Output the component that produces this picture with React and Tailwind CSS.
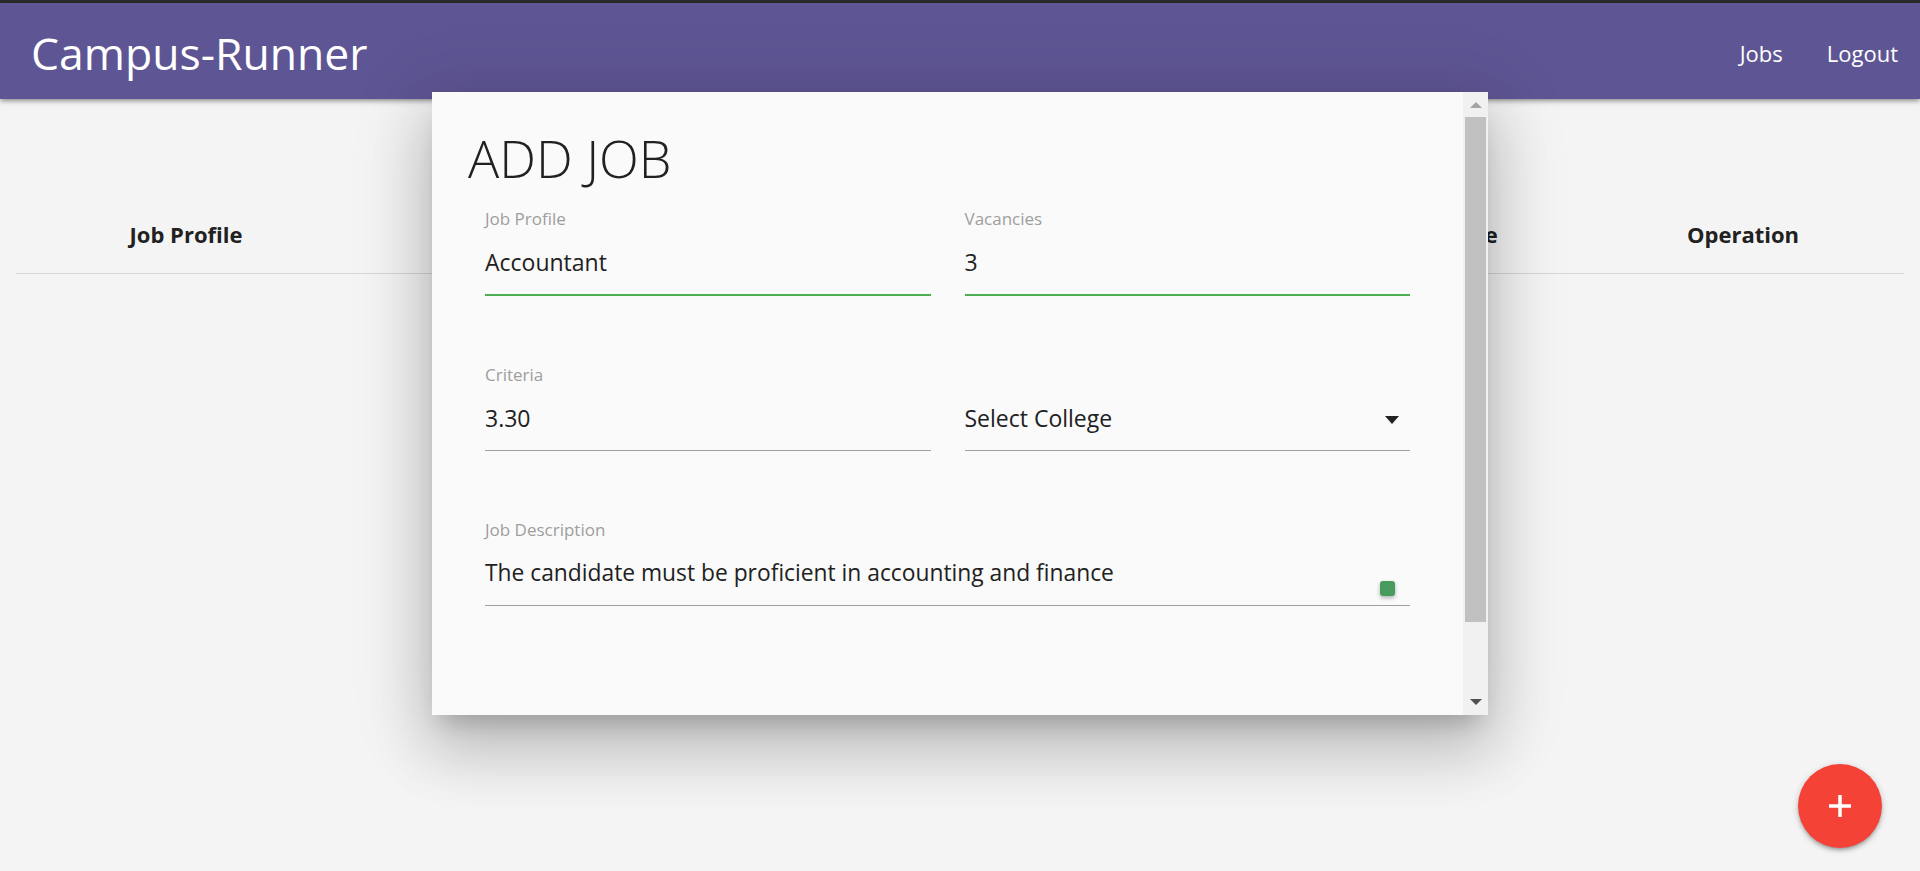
import React from "react";

const font = { fontFamily: '"Open Sans", "Noto Sans", sans-serif' };

function Field({ label, value, focused, small, children }) {
  return (
    <div>
      <div className="h-[20px] text-[17px] leading-[20px] text-[#9e9e9e]">{label}</div>
      <div
        className={
          small
            ? "relative mt-[18px] h-[30px] text-[22.8px] leading-[30px] text-[#212121] whitespace-nowrap"
            : "relative mt-[18px] h-[30px] text-[23px] leading-[30px] text-[#212121] whitespace-nowrap"
        }
      >
        {value}
        {children}
      </div>
      <div
        className={
          focused
            ? "mt-[17px] h-[1px] bg-[#4caf50] shadow-[0_1px_0_0_#4caf50]"
            : "mt-[17px] h-[1px] bg-[#9e9e9e]"
        }
      />
    </div>
  );
}

export default function App() {
  return (
    <div className="relative h-[871px] w-[1920px] overflow-hidden bg-[#f4f4f4]" style={font}>
      <div className="h-[3px] bg-[#2b2b2b]" />
      <nav className="relative z-10 flex h-[96px] items-center justify-between bg-[#5e5594] pt-[3px] pl-[31px] shadow-[0_3px_3px_0_rgba(0,0,0,0.14),0_4px_2px_-3px_rgba(0,0,0,0.12),0_2px_7px_0_rgba(0,0,0,0.2)]">
        <div className="text-[44.5px] leading-[61px] text-white">Campus-Runner</div>
        <div className="flex h-full items-center text-[22px] leading-[30px] text-white">
          <span className="px-[22px]">Jobs</span>
          <span className="px-[22px]">Logout</span>
        </div>
      </nav>

      <main className="px-[16px] pt-[98px]">
        <div className="grid grid-cols-[340px_489px_489px_248px_1fr] border-b border-[#d6d6d6] pt-[22px] pb-[24px] text-center text-[22px] font-bold leading-[30px] text-[#212121]">
          <div>Job Profile</div>
          <div className="invisible">Vacancies</div>
          <div className="invisible">Criteria</div>
          <div>College</div>
          <div>Operation</div>
        </div>
      </main>

      {/* Modal */}
      <div className="absolute left-[432px] top-[92px] z-20 flex h-[623px] w-[1056px] bg-[#fafafa] shadow-[0_36px_57px_4px_rgba(0,0,0,0.14),0_13px_69px_12px_rgba(0,0,0,0.12),0_16px_22px_-10px_rgba(0,0,0,0.2)]">
        <div className="flex-1 px-[36px] pt-[34px]">
          <h4 className="h-[64px] text-[52px] font-light leading-[64px] text-[#212121]">ADD JOB</h4>
          <div className="mt-[19px] px-[17px]">
            <div className="grid grid-cols-2 gap-x-[34px]">
              <Field label="Job Profile" value="Accountant" focused />
              <Field label="Vacancies" value="3" focused />
            </div>
            <div className="mt-[70px] grid grid-cols-2 gap-x-[34px]">
              <Field label="Criteria" value="3.30" />
              <div>
                <div className="h-[20px]" />
                <div className="mt-[18px] flex h-[30px] items-center justify-between pr-[11px] text-[23px] leading-[30px] text-[#212121]">
                  <span>Select College</span>
                  <svg width="14" height="8" viewBox="0 0 14 8" className="mt-[3px]">
                    <path d="M0 0 L14 0 L7 8 Z" fill="#222" />
                  </svg>
                </div>
                <div className="mt-[17px] h-[1px] bg-[#9e9e9e]" />
              </div>
            </div>
            <div className="mt-[69px]">
              <Field label="Job Description" value="The candidate must be proficient in accounting and finance" small>
                <div className="absolute right-[15px] top-[23px] h-[15px] w-[15px] rounded-[3px] bg-[#479b5c] shadow-[0_2px_4px_rgba(0,0,0,0.3)]" />
              </Field>
            </div>
          </div>
        </div>
        {/* scrollbar */}
        <div className="flex w-[25px] flex-col items-center bg-[#f1f1f1]">
          <div className="flex h-[25px] items-center justify-center">
            <svg width="12" height="6" viewBox="0 0 12 6">
              <path d="M0 6 L12 6 L6 0 Z" fill="#a3a3a3" />
            </svg>
          </div>
          <div className="h-[505px] w-[21px] bg-[#c1c1c1]" />
          <div className="flex flex-1 items-end justify-center pb-[10px]">
            <svg width="12" height="6" viewBox="0 0 12 6">
              <path d="M0 0 L12 0 L6 6 Z" fill="#505050" />
            </svg>
          </div>
        </div>
      </div>

      {/* FAB */}
      <div className="absolute bottom-[23px] right-[38px] flex h-[84px] w-[84px] items-center justify-center rounded-full bg-[#f44336] shadow-[0_3px_3px_0_rgba(0,0,0,0.14),0_4px_2px_-3px_rgba(0,0,0,0.12),0_2px_7px_0_rgba(0,0,0,0.2)]">
        <svg width="24" height="24" viewBox="0 0 24 24">
          <path d="M12 1 V23 M1 12 H23" stroke="white" strokeWidth="3.5" />
        </svg>
      </div>
    </div>
  );
}
